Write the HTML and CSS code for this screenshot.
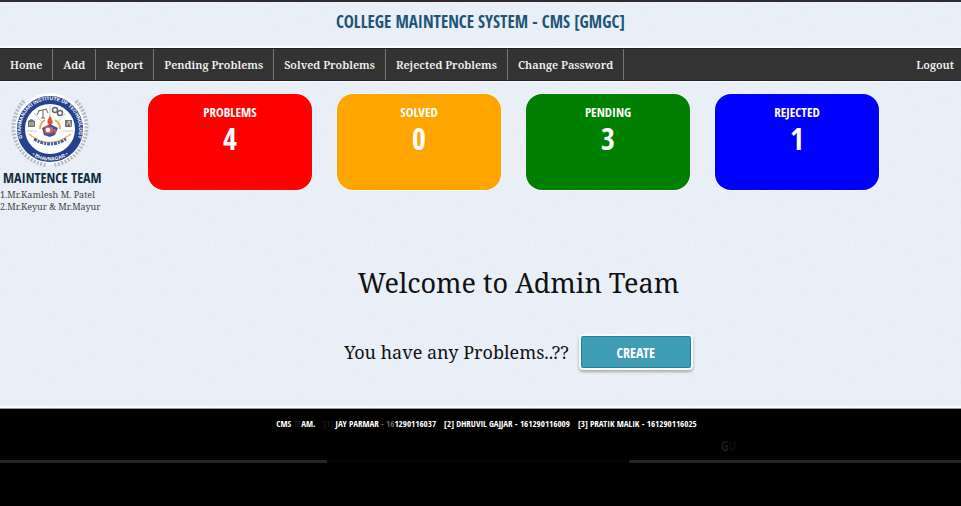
FILE: index.html
```html
<!DOCTYPE html>
<html lang="en">
<head>
<meta charset="utf-8">
<title>College Maintence System</title>
<link rel="stylesheet" href="styles.css">
</head>
<body>
<header class="banner"><h1>COLLEGE MAINTENCE SYSTEM - CMS [GMGC]</h1></header>
<nav class="nav">
  <a href="#">Home</a>
  <a href="#">Add</a>
  <a href="#">Report</a>
  <a href="#">Pending Problems</a>
  <a href="#">Solved Problems</a>
  <a href="#">Rejected Problems</a>
  <a href="#">Change Password</a>
  <a href="#" class="logout">Logout</a>
</nav>
<div class="page">
  <aside class="team">
    <svg class="seal" viewBox="0 0 80 74" aria-hidden="true">
      <defs>
        <path id="ring-top" d="M18 55 A29 29 0 1 1 62 55"/>
        <path id="ring-bottom" d="M16 56.500 A31.500 31.500 0 0 0 64 56.500"/>
      </defs>
      <circle cx="40" cy="36" r="36" fill="#fbfcfe"/>
      <path d="M14 8 A38 38 0 0 0 37 72 M66 8 A38 38 0 0 1 43 72" fill="none" stroke="#b9bdc2" stroke-width="4" stroke-dasharray="2 1.500"/>
      <circle cx="40" cy="36" r="34" fill="#fff"/>
      <circle cx="40" cy="36" r="29" fill="#fff" stroke="#26418f" stroke-width="8"/>
      <text class="seal-text"><textPath href="#ring-top" startOffset="50%" text-anchor="middle">GYANMANJARI INSTITUTE OF TECHNOLOGY</textPath></text>
      <text class="seal-text"><textPath href="#ring-bottom" startOffset="50%" text-anchor="middle">• BHAVNAGAR •</textPath></text>
      <path d="M40 12V25M24 20L32 29M56 20L48 29M17 38H27M53 38H63" stroke="#c9ccd2" stroke-width="1"/>
      <path d="M28 18L37 16M33 17V25M31 25H35M29 18L27 22M36 16L38 20" stroke="#666" stroke-width="1" fill="none"/>
      <g fill="none" stroke="#666" stroke-width="1.500"><circle cx="45" cy="17" r="2.500"/><circle cx="50" cy="20" r="2.500"/></g>
      <path d="M18 28L21 26L25 28V34H18Z" fill="#707070"/>
      <path d="M19 30H24M19 32H24" stroke="#ccc"/>
      <rect x="55" y="27" width="7" height="7" fill="#777"/>
      <path d="M57 32L59 28L61 33" stroke="#ddd" fill="none"/>
      <path d="M30 36A10 10 0 0 1 35 27M50 36A10 10 0 0 0 45 27" fill="none" stroke="#f5a64a" stroke-width="2"/>
      <path d="M40 23C36 29 37 31 40 32C44 31 43 28 40 23Z" fill="#ef492b"/>
      <path d="M32 35L40 31L48 35L45 42L40 44L34 42Z" fill="#3157a7"/>
      <circle cx="38" cy="37" r="3" fill="#fff" stroke="#f05b49" stroke-width="1.500"/>
      <path d="M42 34V40M42 37H45V41" fill="none" stroke="#f05b49" stroke-width="1.500"/>
      <path d="M19 41Q39 58 61 41" fill="none" stroke="#f2b169" stroke-width="1.500"/>
      <path d="M24 46Q40 56 56 46" fill="none" stroke="#3e5fa8" stroke-width="3" stroke-dasharray="3 1 2 1"/>
    </svg>
    <h2>MAINTENCE TEAM</h2>
    <p>1.Mr.Kamlesh M. Patel<br>2.Mr.Keyur &amp; Mr.Mayur</p>
  </aside>
  <main>
    <section class="cards">
      <div class="card problems"><h3>PROBLEMS</h3><strong>4</strong></div>
      <div class="card solved"><h3>SOLVED</h3><strong>0</strong></div>
      <div class="card pending"><h3>PENDING</h3><strong>3</strong></div>
      <div class="card rejected"><h3>REJECTED</h3><strong>1</strong></div>
    </section>
    <section class="welcome">
      <h2>Welcome to Admin Team</h2>
      <div class="prompt"><span>You have any Problems..??</span><button type="button">CREATE</button></div>
    </section>
  </main>
</div>
<footer class="footer">
  <p class="credits"><span>CMS <i class="dark">TE</i>AM.</span><span><i class="dark">[1]</i> JAY PARMAR <i class="dim">- 16</i>1290116037</span><span>[2] DHRUVIL GAJJAR - 161290116009</span><span>[3] PRATIK MALIK - 161290116025</span></p>
  <p class="ghost">G<i>U</i></p>
  <div class="rule"></div>
</footer>
</body>
</html>
```
FILE: styles.css
```css
* { box-sizing: border-box; }
html, body { min-height: 100%; }
body {
  margin: 0;
  background: #000;
  color: #111;
  font-family: "Noto Serif", "DejaVu Serif Condensed", serif;
}
h1, h2, h3, p { margin: 0; font-weight: normal; }
i { font-style: normal; }
h1, .team h2, .card, button, .footer {
  font-family: "Open Sans Condensed", "Roboto Condensed", "Open Sans", sans-serif;
  font-weight: bold;
}
.banner, .page {
  background: #ebf0f8 url("data:image/svg+xml,%3Csvg xmlns='http://www.w3.org/2000/svg' width='160' height='160'%3E%3Cfilter id='n'%3E%3CfeTurbulence type='fractalNoise' baseFrequency='.35' numOctaves='2' stitchTiles='stitch'/%3E%3CfeColorMatrix values='0 0 0 0 .65 0 0 0 0 .72 0 0 0 0 .8 .4 0 0 0 -.13'/%3E%3C/filter%3E%3Crect width='160' height='160' filter='url(%23n)'/%3E%3C/svg%3E");
}
.banner {
  height: 48px;
  padding-top: 8px;
  border-top: 2px solid #302c2e;
  border-bottom: 2px solid #fafcfd;
  text-align: center;
}
h1 { color: #1c5577; font-size: 17px; line-height: 24px; font-weight: bold; }
.nav {
  display: flex;
  height: 33px;
  background: #333;
  border-top: 1px solid #222;
  border-bottom: 1px solid #222;
}
.nav a {
  padding: 0 10px;
  border-right: 1px solid #777;
  color: #f5f5f5;
  font-size: 11px;
  font-weight: 600;
  line-height: 31px;
  text-decoration: none;
  white-space: nowrap;
}
.nav .logout { margin-left: auto; padding-right: 7px; border-right: 0; }
.page {
  display: flex;
  min-height: 327px;
  border-top: 1px solid #fafcfd;
  border-bottom: 2px solid #fafcfd;
}
.team { flex: 0 0 148px; padding-top: 11px; white-space: nowrap; }
.seal { display: block; width: 80px; height: 74px; margin-left: 10px; }
.seal-text { fill: #fff; font-family: "Liberation Sans", sans-serif; font-size: 5px; font-weight: bold; }
.team h2 { padding-left: 3px; color: #102c3d; font-size: 14px; line-height: 22px; font-weight: bold; }
.team p { color: #444; font-size: 9px; line-height: 12px; }
main { flex: 1; min-width: 0; }
.cards {
  display: grid;
  grid-template-columns: repeat(4, 1fr);
  gap: 25px;
  padding: 12px 82px 0 0;
}
.card {
  height: 96px;
  padding-top: 8px;
  border-radius: 16px;
  box-shadow: 0 0 0 1px #f4f7fc;
  color: #fff;
  text-align: center;
}
.card h3 { font-size: 13px; line-height: 20px; font-weight: bold; }
.card strong { display: block; font-size: 30px; line-height: 34px; font-weight: 800; }
.problems { background: #f00; }
.solved { background: #ffa500; }
.pending { background: #008000; }
.rejected { background: #00f; }
.welcome { padding: 73px 72px 0 0; text-align: center; }
.welcome h2 { font-size: 27px; line-height: 40px; }
.prompt {
  display: flex;
  justify-content: center;
  align-items: center;
  gap: 10px;
  margin-top: 31px;
  font-size: 18px;
}
button {
  width: 114px;
  height: 36px;
  border: 2px solid #fafcfd;
  border-radius: 4px;
  background: #3e9cb5;
  box-shadow: inset 0 0 0 1px #258399, 0 2px 3px #aaa;
  color: #fff;
  font-size: 14px;
}
.footer { min-height: 98px; border-top: 1px solid #999; color: #fff; }
.credits {
  display: flex;
  justify-content: center;
  padding: 7px 0 0 12px;
  gap: 8px;
  font-size: 9px;
  line-height: 16px;
  font-weight: bold;
  white-space: nowrap;
}
.dark { color: #181818; }
.dim { color: #666; }
.ghost { padding-left: 75%; color: #1a1a1a; font-size: 14px; line-height: 28px; }
.ghost i { color: #0c0c0c; }
.rule {
  height: 3px;
  background: linear-gradient(90deg, #252528 34%, #050505 34% 65.500%, #252528 65.500%);
}
```
